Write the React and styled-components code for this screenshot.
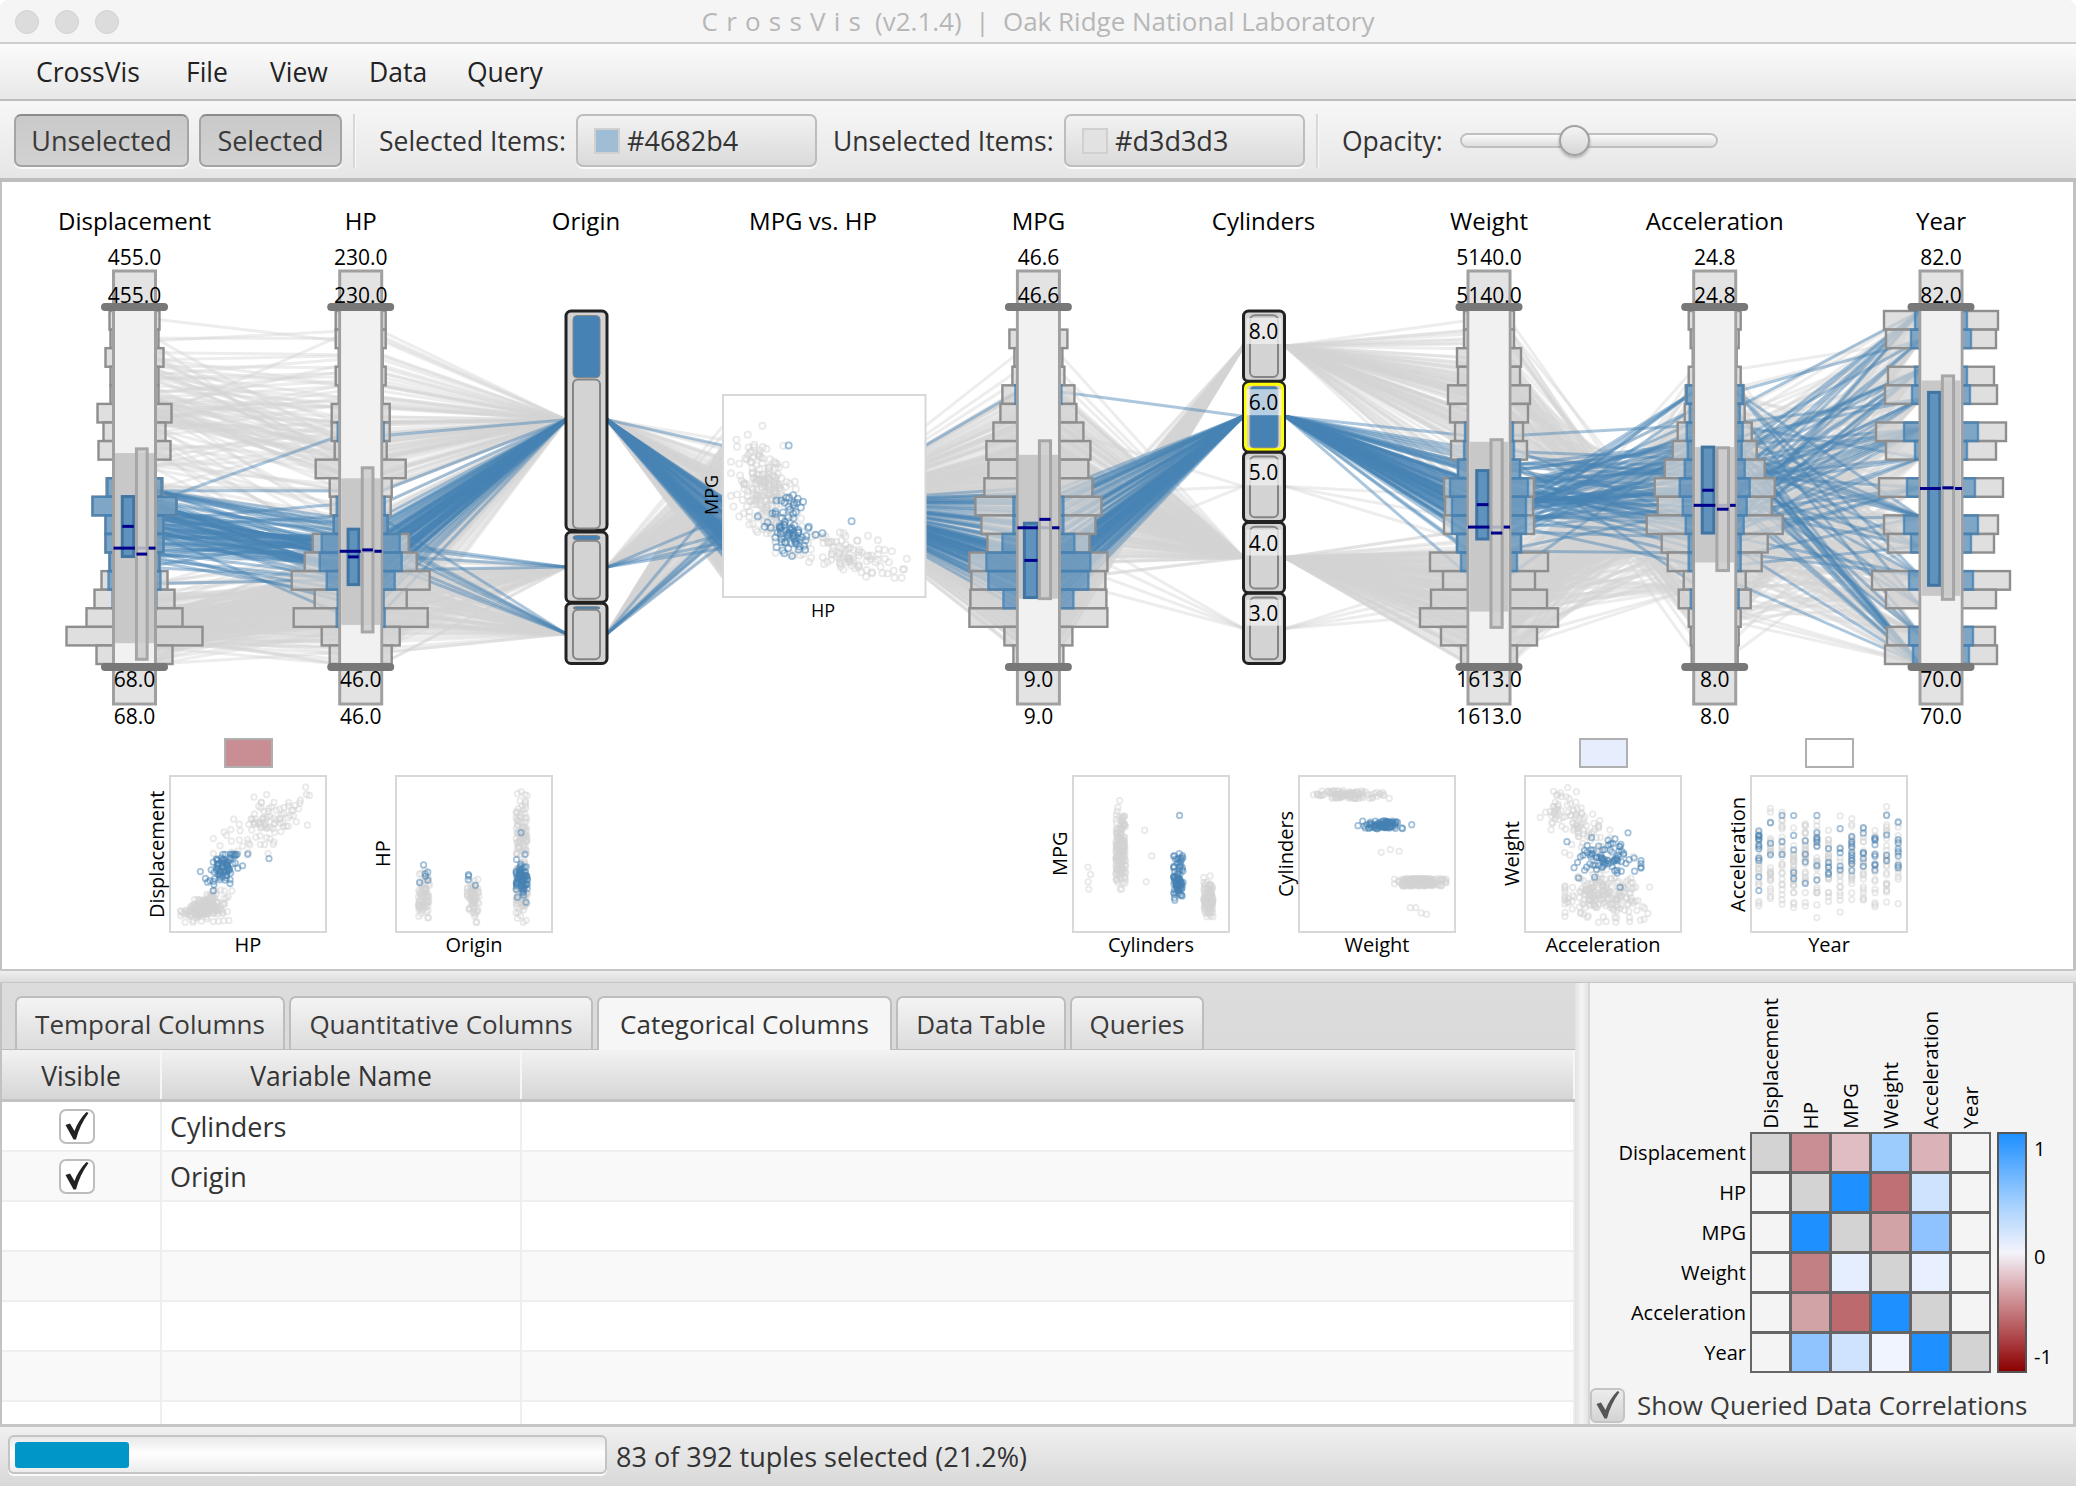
import React, { useMemo } from "react";
import styled, { createGlobalStyle } from "styled-components";

const FONT = '"Open Sans", "Liberation Sans", Arial, sans-serif';

const Global = createGlobalStyle`
  html, body { margin: 0; padding: 0; background: #fff; }
  * { box-sizing: border-box; }
`;

/* ---------- synthetic auto data ---------- */
function makeData() {
  let a = 20240611;
  const rnd = () => {
    a |= 0; a = (a + 0x6d2b79f5) | 0;
    let t = Math.imul(a ^ (a >>> 15), 1 | a);
    t = (t + Math.imul(t ^ (t >>> 7), 61 | t)) ^ t;
    return ((t ^ (t >>> 14)) >>> 0) / 4294967296;
  };
  const N = () => {
    const v = Math.sqrt(-2 * Math.log(rnd() + 1e-9)) * Math.cos(2 * Math.PI * rnd());
    return Math.max(-2.4, Math.min(2.4, v));
  };
  const cl = (v, lo, hi) => Math.max(lo, Math.min(hi, v));
  const out = [];
  const push = (cyl, origin, f) => {
    const s = N();
    const year = 70 + Math.floor(rnd() * 13);
    out.push({ cyl, origin, year, ...f(s, year), jx: rnd() * 2 - 1, jy: rnd() * 2 - 1 });
  };
  for (let i = 0; i < 103; i++)
    push(8, 0, (s) => ({
      disp: cl(345 + 34 * s + 22 * N(), 260, 455),
      hp: cl(158 + 20 * s + 20 * N(), 90, 230),
      weight: cl(4120 + 360 * s + 170 * N(), 3086, 5140),
      mpg: cl(15 - 1.6 * s + 1.9 * N(), 9, 26),
      accel: cl(12.9 - 1.2 * s + 1.4 * N(), 8, 22),
    }));
  for (let i = 0; i < 83; i++)
    push(6, i < 73 ? 0 : i < 77 ? 1 : 2, (s, y) => ({
      disp: cl(218 + 22 * s + 14 * N(), 146, 258),
      hp: cl(102 + 7 * s + 9 * N() + (i === 3 ? 55 : 0), 72, 165),
      weight: cl(3200 + 220 * s + 120 * N(), 2472, 3907),
      mpg: cl(20 - 1.4 * s + 2.2 * N() + (y > 79 ? 5 : 0) + (i === 5 ? 14 : 0), 15, 38),
      accel: cl(16.4 + 1.9 * N(), 11, 21),
    }));
  for (let i = 0; i < 199; i++)
    push(4, i < 69 ? 0 : i < 130 ? 1 : 2, (s, y) => ({
      disp: cl(110 + 16 * s + 13 * N(), 68, 156),
      hp: cl(78 + 8 * s + 11 * N(), 46, 115),
      weight: cl(2300 + 250 * s + 130 * N(), 1613, 2950),
      mpg: cl(29 - 2.8 * s + 3.6 * N() + (y - 76) * 0.5, 18, 46.6),
      accel: cl(16.6 + 2.4 * N(), 11.6, 24.8),
    }));
  for (let i = 0; i < 3; i++)
    push(5, 1, () => ({ disp: 130 + i * 14, hp: 72 + i * 14, weight: 2830 + i * 230, mpg: 20 + i * 7, accel: 16 + i * 2 }));
  for (let i = 0; i < 4; i++)
    push(3, 2, () => ({ disp: 70 + i, hp: 90 + i * 7, weight: 2120 + i * 140, mpg: 18 + i * 2, accel: 12 + i * 0.7 }));
  return out;
}

/* ---------- parallel coordinates ---------- */
const TOP = 311;
const BOT = 664;
const BIN = (BOT - TOP) / 19;
const V = (v) => 190 + v / 2.851;
const scale = (d0, d1, r0, r1) => (v) => r0 + ((v - d0) / (d1 - d0)) * (r1 - r0);
const yAxis = (min, max) => scale(min, max, BOT, TOP);

const Z3 = (v) => 40 + v / 2.613;
const Z4 = (v) => 560 + v / 2.063;
const Z5 = (v) => 1400 + v / 2.3195;

const AXES = [
  {
    name: "Displacement", key: "disp", cx: 134.5, min: 68, max: 455, hi: "455.0", lo: "68.0", z: Z3,
    hist: [[25,0],[24,0],[29,0],[24,0],[24,0],[37,0],[31,0],[36,0],[20,0],[28,27],[42,42],[29,29],[29,29],[25,25],[33,26],[40,22],[48,20],[68,0],[38,0]],
    box: [750, 1292], blue: [215, 245, 874, 1045], grey: [252, 280, 738, 1338], long: 1021, sb: 959, sg: 1038,
  },
  {
    name: "HP", key: "hp", cx: 360.7, min: 46, max: 230, hi: "230.0", lo: "46.0", z: Z3,
    hist: [[25,0],[25,0],[22,0],[25,0],[22,0],[29,0],[29,23],[26,0],[45,0],[31,0],[30,24],[27,27],[48,39],[56,41],[69,34],[46,23],[67,24],[39,0],[31,0]],
    box: [822, 1240], blue: [805, 833, 967, 1125], grey: [842, 870, 792, 1260], long: 1030, sb: 1046, sg: 1026,
  },
  {
    name: "MPG", key: "mpg", cx: 1038.4, min: 9, max: 46.6, hi: "46.6", lo: "9.0", z: Z4,
    hist: [[0,0],[29,0],[24,0],[26,0],[36,23],[38,0],[45,0],[52,0],[50,0],[54,0],[63,25],[57,25],[51,36],[69,52],[67,50],[68,35],[69,0],[34,0],[25,0]],
    box: [755, 1165], blue: [958, 985, 950, 1162], grey: [989, 1012, 715, 1165], long: 963, sb: 1056, sg: 939,
  },
  {
    name: "Weight", key: "weight", cx: 1489, min: 1613, max: 5140, hi: "5140.0", lo: "1613.0", z: Z5,
    hist: [[25,0],[25,0],[32,0],[31,0],[41,0],[39,0],[34,24],[38,25],[31,31],[45,39],[44,37],[45,37],[32,32],[59,28],[46,0],[58,0],[69,0],[48,0],[28,0]],
    box: [718, 1202], blue: [178, 205, 800, 995], grey: [211, 237, 712, 1247], long: 961, sb: 897, sg: 978,
  },
  {
    name: "Acceleration", key: "accel", cx: 1714.7, min: 8, max: 24.8, hi: "24.8", lo: "8.0", z: Z5,
    hist: [[26,0],[24,0],[22,0],[26,0],[29,28],[30,25],[37,28],[42,27],[50,30],[60,35],[57,32],[68,29],[53,26],[47,26],[31,0],[36,24],[26,0],[24,0],[23,0]],
    box: [733, 1062], blue: [701, 728, 733, 978], grey: [735, 762, 735, 1085], long: 899, sb: 856, sg: 910,
  },
  {
    name: "Year", key: "year", cx: 1941, min: 70, max: 82, hi: "82.0", lo: "70.0", z: Z5,
    hist: [[57,26],[55,30],[0,0],[53,26],[56,29],[0,0],[65,37],[55,26],[0,0],[62,34],[0,0],[57,37],[53,30],[0,0],[69,32],[55,0],[0,0],[54,32],[56,28]],
    box: [543, 1157], blue: [1226, 1252, 577, 1127], grey: [1258, 1284, 530, 1167], long: 851, sb: 851, sg: 849,
  },
];
const AX = Object.fromEntries(AXES.map((a) => [a.key, a]));

const ORIGIN_X = [566, 607];
const CYL_X = [1243.5, 1285];
const ORIGIN_Y = [V(655), V(1075), V(1265)];
const CYL_Y = { 8: V(445), 6: V(645), 5: V(845), 4: V(1048), 3: V(1250) };
const SC = { x0: 723, x1: 925.5, y0: 395, y1: 597 };
const scX = scale(46, 230, SC.x0 + 8, SC.x1 - 8);
const scY = scale(9, 46.6, SC.y1 - 12, SC.y0 + 9);

const axisY = (d, key) => yAxis(AX[key].min, AX[key].max)(d[key]);

function segments(d) {
  const R = 21;
  const yD = axisY(d, "disp"), yH = axisY(d, "hp"), yM = axisY(d, "mpg");
  const yW = axisY(d, "weight"), yA = axisY(d, "accel"), yY = axisY(d, "year");
  const yO = ORIGIN_Y[d.origin], yC = CYL_Y[d.cyl], yS = scY(d.mpg);
  return [
    [134.5 + R, yD, 360.7 - R, yH],
    [360.7 + R, yH, ORIGIN_X[0], yO],
    [ORIGIN_X[1], yO, SC.x0, yS],
    [SC.x1, yS, 1038.4 - R, yM],
    [1038.4 + R, yM, CYL_X[0], yC],
    [CYL_X[1], yC, 1489 - R, yW],
    [1489 + R, yW, 1714.7 - R, yA],
    [1714.7 + R, yA, 1941 - R, yY],
  ];
}

/* ---------- styled parts ---------- */
const Window = styled.div`
  width: 2076px; height: 1486px; display: flex; flex-direction: column;
  overflow: hidden; font-family: ${FONT}; color: #333; background: #e8e8e8;
  border-radius: 9px 9px 0 0;
`;
const TitleBar = styled.div`
  position: relative; height: 44px; flex: none; display: flex; align-items: center; justify-content: center;
  background: #f5f5f5; border-bottom: 2px solid #cfcfcf;
  font-size: 26px; color: #b7b7b7;
`;
const TrafficLights = styled.div`
  position: absolute; left: 15px; top: 10px; display: flex; gap: 16px;
`;
const Light = styled.span`
  width: 24px; height: 24px; border-radius: 50%; background: #dcdcdc; border: 1px solid #d2d2d2;
`;
const Spaced = styled.span`
  letter-spacing: 8.2px; margin-right: 6px;
`;
const TitleText = styled.span`
  white-space: pre;
`;
const MenuBar = styled.div`
  height: 57px; flex: none; display: flex; align-items: center; padding-left: 36px; gap: 42px;
  background: linear-gradient(#fbfbfb, #e8e8e8); border-bottom: 2px solid #bcbcbc;
  font-size: 26.5px; color: #222;
`;
const MenuItem = styled.span`
  width: ${(p) => p.$w}px; flex: none; white-space: nowrap;
`;
const ToolBar = styled.div`
  height: 81px; flex: none; display: flex; align-items: center; padding: 2px 0 0 14px;
  background: linear-gradient(#f7f7f7, #e6e6e6); border-bottom: 4px solid #bdbdbd;
  font-size: 27px;
`;
const ToggleButton = styled.div`
  width: ${(p) => p.$w}px; height: 53px; margin-right: ${(p) => p.$mr}px; flex: none;
  display: flex; align-items: center; justify-content: center;
  background: linear-gradient(#c9c9c9, #d2d2d2); border: 2px solid #a4a4a4; border-top-color: #8c8c8c;
  border-radius: 7px; box-shadow: 0 2px 0 #fafafa; color: #3a3a3a;
`;
const Separator = styled.div`
  width: 2px; height: 54px; flex: none; background: #d8d8d8; margin-left: ${(p) => p.$ml}px;
  box-shadow: 1px 0 0 #fafafa;
`;
const ToolLabel = styled.span`
  flex: none; width: ${(p) => p.$w}px; margin-left: ${(p) => p.$ml}px; color: #333; white-space: nowrap;
  font-size: 26.5px;
`;
const ColorPicker = styled.div`
  flex: none; width: 241px; height: 53px; display: flex; align-items: center; padding-left: 16px; gap: 7px;
  border: 2px solid #bdbdbd; border-radius: 7px;
  background: linear-gradient(#f2f2f2, #dadada); box-shadow: 0 2px 0 #fafafa; color: #333;
`;
const ColorSwatch = styled.span`
  width: 26px; height: 26px; background: ${(p) => p.$c}; border: 2px solid #d0d0d0;
`;
const SliderTrack = styled.div`
  position: relative; flex: none; width: 258px; height: 15px; margin-left: 17px; border-radius: 8px;
  border: 2px solid #c0c0c0; background: linear-gradient(#fafafa, #dedede);
`;
const SliderThumb = styled.div`
  position: absolute; left: 97px; top: -10px; width: 31px; height: 31px; border-radius: 50%;
  border: 2px solid #a2a2a2; background: linear-gradient(#f4f4f4, #d6d6d6); box-shadow: 0 2px 3px rgba(0,0,0,.25);
`;
const VisPanel = styled.div`
  height: 787px; flex: none; background: #fff; border-left: 2px solid #c2c2c2; border-right: 3px solid #c2c2c2;
`;
const ParCoords = styled.svg`
  display: block; width: 2071px; height: 553px; font-family: ${FONT};
`;
const AxisTitle = styled.text`
  font-size: 24px; fill: #000; text-anchor: middle; dominant-baseline: central;
`;
const AxisValue = styled.text`
  font-size: 21px; fill: #000; text-anchor: middle; dominant-baseline: central;
`;
const GreyLines = styled.g`
  stroke: #d3d3d3; stroke-opacity: .42; stroke-width: 3; fill: none;
`;
const BlueLines = styled.g`
  stroke: #4682b4; stroke-opacity: .45; stroke-width: 3; fill: none;
`;
const HistBar = styled.rect`
  fill: rgba(211,211,211,.72); stroke: #8e8e8e; stroke-width: 2.4;
`;
const HistSel = styled.rect`
  fill: rgba(70,130,180,.62); stroke: rgba(70,130,180,.8); stroke-width: 2.4;
`;
const AxisOuter = styled.rect`
  fill: #e3e3e3; stroke: #a0a0a0; stroke-width: 3;
`;
const AxisInner = styled.rect`
  fill: #f1f1f1;
`;
const StdBox = styled.rect`
  fill: #c8c8c8;
`;
const NarrowBlue = styled.rect`
  fill: #5f93be; stroke: #3f74a3; stroke-width: 3;
`;
const NarrowGrey = styled.rect`
  fill: rgba(205,205,205,.85); stroke: #a6a6a6; stroke-width: 3;
`;
const Navy = styled.rect`
  fill: #00008b;
`;
const Handle = styled.rect`
  fill: #787878;
`;
const CatFrame = styled.rect`
  fill: #d3d3d3; stroke: #222; stroke-width: 3;
`;
const CatHighlight = styled.rect`
  fill: #d3d3d3; stroke: #ffff00; stroke-width: 3;
`;
const CatInner = styled.rect`
  fill: #d3d3d3; stroke: #858585; stroke-width: 2;
`;
const CatBlue = styled.rect`
  fill: #4682b4; stroke: #858585; stroke-width: 1;
`;
const CatLabelBand = styled.rect`
  fill: rgba(240,240,240,.78);
`;
const CatLabelBandSel = styled.rect`
  fill: rgba(255,255,255,.62);
`;
const PlotBack = styled.rect`
  fill: #fff; stroke: #d8d8d8; stroke-width: 2;
`;
const DotGrey = styled.circle`
  fill: none; stroke: #d3d3d3; stroke-opacity: .5; stroke-width: 1.8;
`;
const DotBlue = styled.circle`
  fill: none; stroke: #4682b4; stroke-opacity: .5; stroke-width: 1.8;
`;
const PlotLabel = styled.text`
  font-size: 18px; fill: #000; text-anchor: middle; dominant-baseline: central;
`;

const MiniRow = styled.div`
  display: flex; gap: 68px; padding-left: 167px; margin-top: 3px;
`;
const MiniSpacer = styled.div`
  width: 383px; flex: none;
`;
const MiniCol = styled.div`
  position: relative; width: 158px; flex: none; display: flex; flex-direction: column; align-items: center;
`;
const SwatchSlot = styled.div`
  height: 30px; width: 49px; margin-bottom: 7px; flex: none;
  ${(p) => (p.$c ? `background:${p.$c}; border:2px solid #b0b0b0;` : "")}
`;
const MiniFrame = styled.svg`
  display: block; width: 158px; height: 158px; background: #fff; border: 2px solid #d8d8d8;
`;
const MiniXLabel = styled.div`
  font-size: 20px; color: #000; line-height: 24px; height: 24px;
`;
const MiniYLabel = styled.div`
  position: absolute; right: 100%; bottom: 24px; height: 158px; display: flex; align-items: center;
  writing-mode: vertical-rl; transform: rotate(180deg); font-size: 20px; color: #000; line-height: 24px; justify-content: center;
`;

const SplitDivider = styled.div`
  height: 13px; flex: none; background: linear-gradient(#efefef, #dcdcdc); border-top: 2px solid #c6c6c6;
`;
const Lower = styled.div`
  height: 442px; flex: none; display: flex; border-top: 1px solid #c6c6c6;
`;
const TablePane = styled.div`
  width: 1575px; flex: none; display: flex; flex-direction: column; overflow: hidden;
  border-left: 2px solid #c2c2c2;
`;
const TabStrip = styled.div`
  height: 67px; flex: none; display: flex; align-items: flex-end; gap: 4px; padding-left: 13px;
  background: linear-gradient(#dcdcdc, #dadada); border-bottom: 1px solid #bcbcbc;
`;
const Tab = styled.div`
  width: ${(p) => p.$w}px; height: ${(p) => (p.$active ? 54 : 53)}px; flex: none; display: flex; align-items: center; justify-content: center;
  font-size: 26px; color: ${(p) => (p.$active ? "#333" : "#3a3a3a")};
  border: 2px solid #bdbdbd; border-bottom: none; border-radius: 7px 7px 0 0;
  padding-bottom: ${(p) => (p.$active ? "1px" : "0")};
  background: ${(p) => (p.$active ? "#f6f6f6" : "linear-gradient(#f4f4f4, #dcdcdc)")};
  margin-bottom: ${(p) => (p.$active ? "-1px" : "0")};
`;
const HeaderRow = styled.div`
  height: 52px; flex: none; display: grid; grid-template-columns: 160px 360px 1fr;
  border-bottom: 3px solid #c2c2c2;
`;
const HeaderCell = styled.div`
  display: flex; align-items: center; justify-content: center; font-size: 26.5px; color: #333; padding-top: 2px;
  background: linear-gradient(#f2f2f2, #d6d6d6); border-right: 2px solid #f6f6f6;
`;
const Rows = styled.div`
  flex: 1; overflow: hidden; background: #fff;
`;
const Row = styled.div`
  height: 50px; display: grid; grid-template-columns: 160px 360px 1fr; background: ${(p) => (p.$alt ? "#f9f9f9" : "#fff")};
  border-bottom: 2px solid #eeeeee;
`;
const Cell = styled.div`
  display: flex; align-items: center; font-size: 27px; color: #333; padding-left: 8px;
  border-right: 2px solid #eeeeee;
`;
const CheckCell = styled(Cell)`
  justify-content: center; padding-left: 0; padding-right: 8px;
`;
const CheckBox = styled.div`
  width: 36px; height: 35px; border-radius: 7px; border: 2px solid #bdbdbd; background: #fff;
  display: flex; align-items: center; justify-content: center;
`;
const PaneGap = styled.div`
  width: 15px; flex: none; background: linear-gradient(90deg, #e2e2e2, #f4f4f4 50%, #e4e4e4); border-right: 2px solid #d6d6d6;
`;
const CorrPane = styled.div`
  flex: 1; background: #f4f4f4; display: flex; flex-direction: column; border-right: 3px solid #c8c8c8;
`;
const ColHeads = styled.div`
  height: 146px; flex: none; display: flex; align-items: flex-end; padding-left: 160px; margin-bottom: 3px;
`;
const ColHead = styled.div`
  width: 40px; flex: none; display: flex; align-items: center; justify-content: flex-start;
  writing-mode: vertical-rl; transform: rotate(180deg); font-size: 20.5px; color: #000; line-height: 40px;
`;
const HeatBody = styled.div`
  display: flex; flex: none; height: 241px;
`;
const RowHeads = styled.div`
  width: 156px; flex: none; margin-right: 4px; display: grid; grid-auto-rows: 40px;
`;
const RowHead = styled.div`
  display: flex; align-items: center; justify-content: flex-end; font-size: 20px; color: #000;
`;
const Matrix = styled.div`
  width: 241px; height: 241px; flex: none; display: grid; grid-template-columns: repeat(6, 37px); grid-auto-rows: 37px;
  gap: 3px; padding: 2px; background: #666;
`;
const HeatCell = styled.div`
  background: ${(p) => p.$c};
`;
const Legend = styled.div`
  width: 30px; height: 241px; margin-left: 6px; flex: none; border: 2px solid #555;
  background: linear-gradient(#1e90ff, #a7d1ff 30%, #f4f4fb 50%, #d9a9ae 65%, #b04a4e 85%, #8b0000);
`;
const LegendScale = styled.div`
  flex: none; margin-left: 7px; height: 241px; display: grid; grid-template-rows: 108px 100px auto;
  padding-top: 4px; font-size: 20px; color: #000; line-height: 26px;
`;
const CorrCheckRow = styled.div`
  display: flex; align-items: center; margin-top: 14px; gap: 12px; font-size: 26px; color: #3a3a3a;
`;
const CorrCheckBox = styled.div`
  width: 35px; height: 35px; border: 2px solid #c4c4c4; border-radius: 6px;
  background: linear-gradient(#ececec, #d4d4d4); display: flex; align-items: center; justify-content: center;
`;
const StatusBar = styled.div`
  height: 62px; flex: none; display: flex; align-items: center; padding: 0 0 0 8px; gap: 9px;
  background: linear-gradient(#f0f0f0, #d8d8d8); border-top: 3px solid #c6c6c6; font-size: 27px; color: #333;
`;
const ProgressTrack = styled.div`
  width: 599px; height: 39px; flex: none; padding: 5px; border: 2px solid #c4c4c4; border-radius: 6px;
  margin-bottom: 5px;
  background: linear-gradient(#e8e8e8, #fff 45%, #ececec); box-shadow: 0 2px 0 #fafafa;
`;
const ProgressFill = styled.div`
  width: 114px; height: 26px; background: #0097c8; border-radius: 3px;
`;

/* ---------- chart helpers ---------- */
const Tick = ({ x, y, w }) => <Navy x={x} y={y - 1.5} width={w} height={3} />;

function QuantAxis({ a }) {
  const { cx, z } = a;
  const R = 21;
  return (
    <g>
      {a.hist.map(([h], i) =>
        h > 0 ? <HistBar key={i} x={cx - h} y={TOP + i * BIN} width={h * 2} height={BIN} /> : null
      )}
      {a.hist.map(([, b], i) =>
        b > 0 ? <HistSel key={i} x={cx - b} y={TOP + i * BIN} width={b * 2} height={BIN} /> : null
      )}
      <AxisOuter x={cx - R} y={271} width={R * 2} height={433} />
      <AxisInner x={cx - R + 1.5} y={307} width={R * 2 - 3} height={360} />
      <StdBox x={cx - R + 1.5} y={V(a.box[0])} width={R * 2 - 3} height={V(a.box[1]) - V(a.box[0])} />
      <NarrowBlue x={z(a.blue[0])} y={V(a.blue[2])} width={z(a.blue[1]) - z(a.blue[0])} height={V(a.blue[3]) - V(a.blue[2])} />
      <Tick x={cx - R} y={V(a.long)} w={R * 2} />
      <NarrowGrey x={z(a.grey[0])} y={V(a.grey[2])} width={z(a.grey[1]) - z(a.grey[0])} height={V(a.grey[3]) - V(a.grey[2])} />
      <Tick x={z(a.blue[0])} y={V(a.sb)} w={z(a.blue[1]) - z(a.blue[0])} />
      <Tick x={z(a.grey[0])} y={V(a.sg)} w={z(a.grey[1]) - z(a.grey[0])} />
      <Handle x={cx - 33.5} y={303} width={67} height={8} rx={4} />
      <Handle x={cx - 33.5} y={663} width={67} height={8} rx={4} />
      <AxisTitle x={cx} y={220.5}>{a.name}</AxisTitle>
      <AxisValue x={cx} y={257}>{a.hi}</AxisValue>
      <AxisValue x={cx} y={295}>{a.hi}</AxisValue>
      <AxisValue x={cx} y={679}>{a.lo}</AxisValue>
      <AxisValue x={cx} y={716}>{a.lo}</AxisValue>
    </g>
  );
}

function OriginAxis() {
  const x = 566, w = 41, ix = 573, iw = 27;
  const R = ({ a, b }) => <CatFrame x={x} y={V(a)} width={w} height={V(b) - V(a)} rx={5} />;
  const I = ({ a, b }) => <CatInner x={ix} y={V(a)} width={iw} height={V(b) - V(a)} rx={5} />;
  const B = ({ a, b }) => <CatBlue x={ix} y={V(a)} width={iw} height={V(b) - V(a)} rx={4} />;
  return (
    <g>
      <AxisTitle x={586} y={220.5}>Origin</AxisTitle>
      <R a={345} b={970} />
      <R a={975} b={1175} />
      <R a={1178} b={1350} />
      <I a={540} b={965} />
      <B a={358} b={535} />
      <I a={1000} b={1165} />
      <B a={985} b={998} />
      <I a={1197} b={1338} />
      <B a={1188} b={1195} />
    </g>
  );
}

function CylinderAxis() {
  const x = 1243.5, w = 41, ix = 1250, iw = 28;
  const rows = [
    { l: "8.0", a: 345, b: 545, ly: 402 },
    { l: "6.0", a: 548, b: 745, ly: 605, sel: true },
    { l: "5.0", a: 748, b: 945, ly: 805 },
    { l: "4.0", a: 948, b: 1148, ly: 1005 },
    { l: "3.0", a: 1150, b: 1350, ly: 1205 },
  ];
  return (
    <g>
      <AxisTitle x={1263.5} y={220.5}>Cylinders</AxisTitle>
      {rows.map((r) => (
        <g key={r.l}>
          <CatFrame x={x} y={V(r.a)} width={w} height={V(r.b) - V(r.a)} rx={5} />
          {r.sel ? (
            <>
              <CatHighlight x={x + 2} y={V(r.a) + 2} width={w - 4} height={V(r.b) - V(r.a) - 4} rx={4} />
              <CatBlue x={ix} y={V(r.a + 12)} width={iw} height={V(r.b - 10) - V(r.a + 12)} rx={4} />
              <CatLabelBandSel x={x + 3} y={V(r.ly) - 13} width={w - 6} height={26} />
            </>
          ) : (
            <>
              <CatInner x={ix} y={V(r.a + 12)} width={iw} height={V(r.b - 12) - V(r.a + 12)} rx={5} />
              <CatLabelBand x={x + 3} y={V(r.ly) - 13} width={w - 6} height={26} />
            </>
          )}
          <AxisValue x={1263.5} y={V(r.ly)}>{r.l}</AxisValue>
        </g>
      ))}
    </g>
  );
}

function Dots({ data, fx, fy, r = 2.8 }) {
  const g = data.filter((d) => d.cyl !== 6);
  const b = data.filter((d) => d.cyl === 6);
  return (
    <>
      {g.map((d, i) => <DotGrey key={i} cx={fx(d)} cy={fy(d)} r={r} />)}
      {b.map((d, i) => <DotBlue key={i} cx={fx(d)} cy={fy(d)} r={r} />)}
    </>
  );
}

function CenterPlot({ data }) {
  return (
    <g>
      <AxisTitle x={813} y={220.5}>MPG vs. HP</AxisTitle>
      <PlotBack x={SC.x0} y={SC.y0} width={SC.x1 - SC.x0} height={SC.y1 - SC.y0} />
      <Dots data={data} fx={(d) => scX(d.hp)} fy={(d) => scY(d.mpg)} r={3.1} />
      <PlotLabel x={711} y={495} transform="rotate(-90 711 495)">MPG</PlotLabel>
      <PlotLabel x={823} y={610}>HP</PlotLabel>
    </g>
  );
}

const L = (lo, hi, a = 8, b = 148) => scale(lo, hi, a, b);
const LY = (lo, hi) => scale(lo, hi, 147, 5);
const ORX = [126, 76, 26];
const CYX = { 3: 15, 4: 46, 5: 73, 6: 105, 8: 136 };
const CYY = { 8: 16, 6: 47, 5: 73, 4: 106, 3: 135 };

const MINI = [
  { x: "HP", y: "Displacement", swatch: "#c88e93", fx: (d) => L(46, 230)(d.hp), fy: (d) => LY(68, 455)(d.disp) },
  { x: "Origin", y: "HP", fx: (d) => ORX[d.origin] + d.jx * 6, fy: (d) => LY(46, 230)(d.hp) },
  "gap",
  { x: "Cylinders", y: "MPG", fx: (d) => CYX[d.cyl] + d.jx * 5, fy: (d) => LY(9, 46.6)(d.mpg) },
  { x: "Weight", y: "Cylinders", fx: (d) => L(5140, 1613)(d.weight), fy: (d) => CYY[d.cyl] + d.jy * 4 },
  { x: "Acceleration", y: "Weight", swatch: "#e6eefd", fx: (d) => L(8, 24.8)(d.accel), fy: (d) => LY(1613, 5140)(d.weight) },
  { x: "Year", y: "Acceleration", swatch: "#ffffff", fx: (d) => L(70, 82, 5, 148)(d.year), fy: (d) => LY(8, 24.8)(d.accel) },
];

function MiniPlot({ spec, data }) {
  return (
    <MiniCol>
      <SwatchSlot $c={spec.swatch} />
      <MiniFrame viewBox="-2 -2 158 158">
        <Dots data={data} fx={spec.fx} fy={spec.fy} />
      </MiniFrame>
      <MiniXLabel>{spec.x}</MiniXLabel>
      <MiniYLabel>{spec.y}</MiniYLabel>
    </MiniCol>
  );
}

/* ---------- heatmap ---------- */
const F = "#f4f4f4", D = "#d3d3d3", B = "#1e90ff";
const HEAT = [
  [D, "#c88e93", "#e0bcc3", "#9ccbfe", "#dab2b8", F],
  [F, D, B, "#bf7074", "#cfe3ff", F],
  [F, B, D, "#d1a2a6", "#8fc3ff", F],
  [F, "#c38084", "#e5eeff", D, "#e8f0ff", F],
  [F, "#d1a2a6", "#bc6a6e", B, D, F],
  [F, "#90c4ff", "#cfe3ff", "#f0f4ff", B, D],
];
const NAMES = ["Displacement", "HP", "MPG", "Weight", "Acceleration", "Year"];

const CheckMark = ({ c = "#222", s = 30 }) => (
  <svg width={s} height={s} viewBox="0 0 30 30">
    <path d="M3.5 14 L8 12.5 L12.5 20 C15 13 19 6.5 24.5 1 L26.5 2 C20.5 10 16.5 19 14 28.5 L11.5 28.5 Z" fill={c} />
  </svg>
);

const TABS = [
  ["Temporal Columns", 270], ["Quantitative Columns", 304], ["Categorical Columns", 295], ["Data Table", 170], ["Queries", 134],
];
const MENUS = [["CrossVis", 108], ["File", 42], ["View", 57], ["Data", 56], ["Query", 73]];

export default function App() {
  const data = useMemo(makeData, []);
  const lines = useMemo(() => {
    const grey = [], blue = [];
    data.forEach((d) => {
      (d.cyl === 6 ? blue : grey).push(...segments(d));
    });
    return { grey, blue };
  }, [data]);
  const seg = (s, i) => <line key={i} x1={s[0]} y1={s[1]} x2={s[2]} y2={s[3]} />;

  return (
    <>
      <Global />
      <Window>
        <TitleBar>
          <TrafficLights><Light /><Light /><Light /></TrafficLights>
          <TitleText><Spaced>CrossVis</Spaced>{"(v2.1.4)  |  Oak Ridge National Laboratory"}</TitleText>
        </TitleBar>
        <MenuBar>
          {MENUS.map(([m, w]) => <MenuItem key={m} $w={w}>{m}</MenuItem>)}
        </MenuBar>
        <ToolBar>
          <ToggleButton $w={175} $mr={10}>Unselected</ToggleButton>
          <ToggleButton $w={143} $mr={0}>Selected</ToggleButton>
          <Separator $ml={11} />
          <ToolLabel $w={197} $ml={24}>Selected Items:</ToolLabel>
          <ColorPicker><ColorSwatch $c="#a0bdd6" />#4682b4</ColorPicker>
          <ToolLabel $w={231} $ml={16}>Unselected Items:</ToolLabel>
          <ColorPicker><ColorSwatch $c="#e2e2e2" />#d3d3d3</ColorPicker>
          <Separator $ml={11} />
          <ToolLabel $w={101} $ml={24}>Opacity:</ToolLabel>
          <SliderTrack><SliderThumb /></SliderTrack>
        </ToolBar>
        <VisPanel>
          <ParCoords viewBox="2 182 2071 553">
            <GreyLines>{lines.grey.map(seg)}</GreyLines>
            <BlueLines>{lines.blue.map(seg)}</BlueLines>
            {AXES.map((a) => <QuantAxis key={a.key} a={a} />)}
            <OriginAxis />
            <CylinderAxis />
            <CenterPlot data={data} />
          </ParCoords>
          <MiniRow>
            {MINI.map((m, i) => (m === "gap" ? <MiniSpacer key={i} /> : <MiniPlot key={i} spec={m} data={data} />))}
          </MiniRow>
        </VisPanel>
        <SplitDivider />
        <Lower>
          <TablePane>
            <TabStrip>
              {TABS.map(([t, w]) => <Tab key={t} $w={w} $active={t === "Categorical Columns"}>{t}</Tab>)}
            </TabStrip>
            <HeaderRow>
              <HeaderCell>Visible</HeaderCell>
              <HeaderCell>Variable Name</HeaderCell>
              <HeaderCell />
            </HeaderRow>
            <Rows>
              {["Cylinders", "Origin", "", "", "", "", ""].map((n, i) => (
                <Row key={i} $alt={i % 2 === 1}>
                  <CheckCell>{n && <CheckBox><CheckMark /></CheckBox>}</CheckCell>
                  <Cell>{n}</Cell>
                  <Cell />
                </Row>
              ))}
            </Rows>
          </TablePane>
          <PaneGap />
          <CorrPane>
            <ColHeads>
              {NAMES.map((n) => <ColHead key={n}>{n}</ColHead>)}
            </ColHeads>
            <HeatBody>
              <RowHeads>
                {NAMES.map((n) => <RowHead key={n}>{n}</RowHead>)}
              </RowHeads>
              <Matrix>
                {HEAT.flat().map((c, i) => <HeatCell key={i} $c={c} />)}
              </Matrix>
              <Legend />
              <LegendScale><span>1</span><span>0</span><span>-1</span></LegendScale>
            </HeatBody>
            <CorrCheckRow>
              <CorrCheckBox><CheckMark c="#555" /></CorrCheckBox>
              Show Queried Data Correlations
            </CorrCheckRow>
          </CorrPane>
        </Lower>
        <StatusBar>
          <ProgressTrack><ProgressFill /></ProgressTrack>
          83 of 392 tuples selected (21.2%)
        </StatusBar>
      </Window>
    </>
  );
}
